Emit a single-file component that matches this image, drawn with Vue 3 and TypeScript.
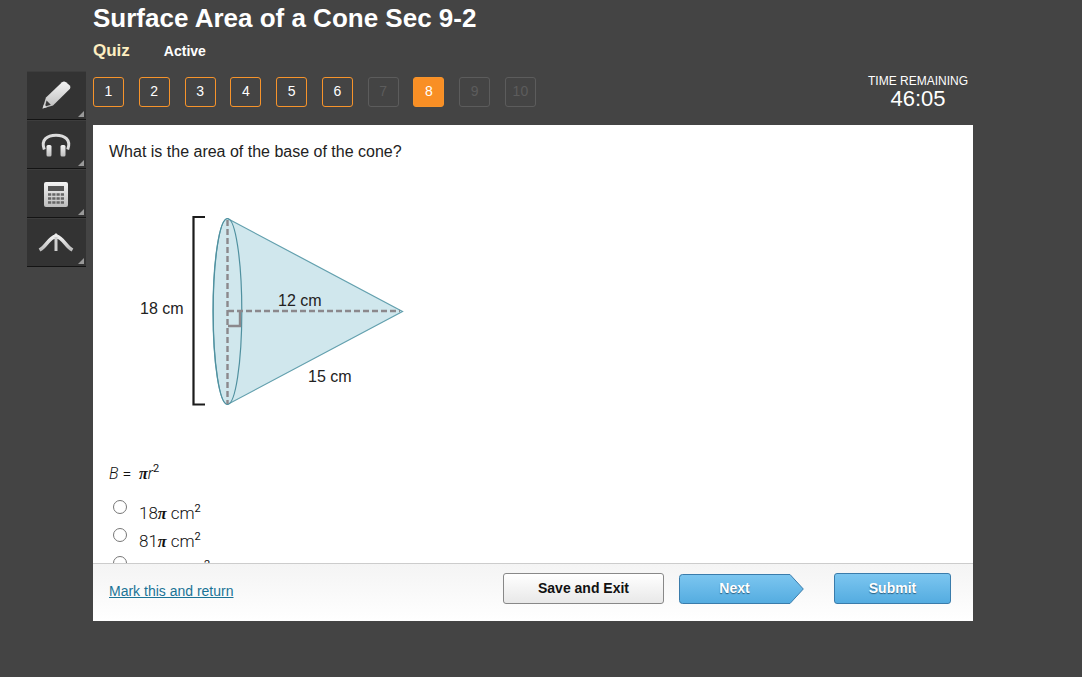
<script setup lang="ts">
import { ref } from 'vue'

type QuestionState = 'done' | 'active' | 'locked'
interface QuestionLink {
  n: number
  state: QuestionState
}

const questions: QuestionLink[] = [
  { n: 1, state: 'done' },
  { n: 2, state: 'done' },
  { n: 3, state: 'done' },
  { n: 4, state: 'done' },
  { n: 5, state: 'done' },
  { n: 6, state: 'done' },
  { n: 7, state: 'locked' },
  { n: 8, state: 'active' },
  { n: 9, state: 'locked' },
  { n: 10, state: 'locked' },
]

const options = ['18', '81', '162']
const answer = ref<string | null>(null)
</script>

<template>
  <div class="page">
    <svg class="defs" width="0" height="0" aria-hidden="true">
      <defs>
        <linearGradient id="silver" x1="0" y1="0" x2="0" y2="1">
          <stop offset="0" stop-color="#f4f4f4" />
          <stop offset="1" stop-color="#bdbdbd" />
        </linearGradient>
      </defs>
    </svg>

    <aside class="tools">
      <button class="tool" type="button" aria-label="Highlighter">
        <svg width="36" height="36" viewBox="0 0 36 36">
          <path d="M8 19.500L24 4.200Q26 2.800 28 4.200L31.800 7.500Q33 9 32 10.800L15 27.500L4.500 30.500Z" fill="url(#silver)" />
          <path d="M8.600 22.500L12.800 26.800L7 28.500Z" fill="#3a3a3a" />
          <path d="M4.500 30.500L6.200 26L8.800 29.200Z" fill="#d8d8d8" />
        </svg>
      </button>
      <button class="tool" type="button" aria-label="Audio">
        <svg width="36" height="36" viewBox="0 0 36 36">
          <path d="M6.300 22.500C2.500 12.500 9.500 8.200 18 8.200S33.500 12.500 29.700 22.500" fill="none" stroke="#dcdcdc" stroke-width="3" />
          <rect x="8.500" y="18" width="5" height="11.500" rx="1.500" fill="url(#silver)" />
          <rect x="22.500" y="18" width="5" height="11.500" rx="1.500" fill="url(#silver)" />
        </svg>
      </button>
      <button class="tool" type="button" aria-label="Calculator">
        <svg width="36" height="36" viewBox="0 0 36 36">
          <rect x="6" y="6" width="24" height="25" rx="2" fill="url(#silver)" />
          <rect x="10" y="10" width="16" height="5" fill="#555" />
          <path d="M10 18.500h16M10 22.500h16M10 26.500h16" stroke="#666" stroke-width="2.500" stroke-dasharray="3.250 1" />
        </svg>
      </button>
      <button class="tool" type="button" aria-label="Tools">
        <svg width="38" height="36" viewBox="0 0 38 36">
          <path d="M2.500 25C9.500 21.500 11 13.500 19 11C27 13.500 28.500 21.500 35.500 25" fill="none" stroke="url(#silver)" stroke-width="3.600" />
          <path d="M13.500 14L19 8L24.500 14Z" fill="#ececec" />
          <path d="M17.500 12h3v14h-3z" fill="#cfcfcf" />
        </svg>
      </button>
    </aside>

    <main class="main">
      <h1 class="title">Surface Area of a Cone Sec 9-2</h1>
      <div class="sub">
        <span class="kind">Quiz</span>
        <span class="status">Active</span>
      </div>
      <div class="bar">
        <nav class="numbers" aria-label="Questions">
          <button
            v-for="q in questions"
            :key="q.n"
            type="button"
            :class="['num', q.state]"
            :disabled="q.state === 'locked'"
          >{{ q.n }}</button>
        </nav>
        <div class="timer">
          <div class="timer-label">TIME REMAINING</div>
          <div class="timer-value">46:05</div>
        </div>
      </div>

      <section class="panel">
        <div class="content">
          <p class="question">What is the area of the base of the cone?</p>
          <svg class="figure" width="300" height="212" viewBox="0 0 300 212" role="img" aria-label="Cone">
            <path d="M118.500 14.500L293.500 107.500L118.500 200.500A14.500 93 0 0 1 118.500 14.500Z" fill="#d0e7ed" stroke="#63a0ae" stroke-width="1.200" />
            <ellipse cx="118.500" cy="107.500" rx="14.300" ry="93" fill="none" stroke="#4f909f" stroke-width="1.200" />
            <path d="M118.500 16V200" class="dash" />
            <path d="M119 107H291" class="dash" />
            <path d="M131 107V122H119" fill="none" stroke="#8b888c" stroke-width="2.400" />
            <path d="M96 13H84.500V200.500H96" fill="none" stroke="#1c1c1c" stroke-width="2.200" />
            <text x="31" y="110">18 cm</text>
            <text x="169" y="102">12 cm</text>
            <text x="199" y="178">15 cm</text>
          </svg>
          <p class="formula"><i>B</i> = &nbsp;<i><span class="pi">π</span>r</i><sup>2</sup></p>
          <div class="options">
            <label v-for="o in options" :key="o" class="option">
              <input v-model="answer" type="radio" name="answer" :value="o" />
              <span class="math">{{ o }}<i class="pi">π</i> cm<sup>2</sup></span>
            </label>
          </div>
        </div>
        <footer class="footer">
          <a class="mark" href="#">Mark this and return</a>
          <div class="actions">
            <button class="btn save" type="button">Save and Exit</button>
            <button class="next" type="button">
              <svg class="arrow" width="125" height="30" viewBox="0 0 125 30" aria-hidden="true">
                <defs>
                  <linearGradient id="sky" x1="0" y1="0" x2="0" y2="1">
                    <stop offset="0" stop-color="#7cc6f0" />
                    <stop offset="1" stop-color="#54ace0" />
                  </linearGradient>
                </defs>
                <path d="M3.500 .5H111L124.300 15L111 29.500H3.500Q.5 29.500 .5 26.500V3.500Q.5 .5 3.500 .5Z" fill="url(#sky)" stroke="#3a7cab" />
              </svg>
              <span class="next-text">Next</span>
            </button>
            <button class="btn submit" type="button">Submit</button>
          </div>
        </footer>
      </section>
    </main>
  </div>
</template>

<style>
body {
  margin: 0;
  background: #444;
}
</style>

<style scoped>
.page {
  box-sizing: border-box;
  height: 100vh;
  min-height: 400px;
  display: flex;
  gap: 7px;
  padding: 0 109px 56px 27px;
  background: #444;
  color: #fff;
  font-family: "Liberation Sans", Arial, sans-serif;
}
.defs {
  position: absolute;
}
button {
  font-family: inherit;
  cursor: pointer;
}
.tools {
  flex: none;
  width: 59px;
  padding-top: 71px;
}
.tool {
  position: relative;
  display: flex;
  align-items: center;
  justify-content: center;
  width: 100%;
  height: 49px;
  padding: 0 2px 0 0;
  border: 0;
  border-top: 1px solid #3d3d3d;
  border-bottom: 1px solid #141414;
  background: #333;
}
.tool::after {
  content: "";
  position: absolute;
  right: 2px;
  bottom: 2px;
  border-left: 6px solid transparent;
  border-bottom: 6px solid #999;
}
.main {
  flex: 1;
  min-width: 0;
  display: flex;
  flex-direction: column;
}
.title {
  margin: 0;
  font-size: 26px;
  line-height: 36px;
}
.sub {
  display: flex;
  align-items: baseline;
  gap: 34px;
  height: 36px;
  line-height: 30px;
  font-weight: bold;
}
.kind {
  font-size: 17px;
  color: #fdeec0;
}
.status {
  font-size: 14px;
}
.bar {
  flex: none;
  display: flex;
  justify-content: space-between;
  height: 53px;
}
.numbers {
  display: flex;
  justify-content: space-between;
  width: 443px;
  padding-top: 5px;
}
.num {
  width: 31px;
  height: 30px;
  padding: 0 0 2px;
  border: 1px solid #f7942b;
  border-radius: 3px;
  background: transparent;
  color: #fff;
  font-size: 14px;
}
.num.active {
  background: #f98f25;
}
.num.locked {
  border-color: #5c5c5c;
  color: #5c5c5c;
}
.timer {
  padding-right: 5px;
  text-align: center;
}
.timer-label {
  font-size: 12px;
  line-height: 18px;
}
.timer-value {
  font-size: 22px;
  line-height: 18px;
}
.panel {
  flex: 1;
  min-height: 0;
  display: flex;
  flex-direction: column;
  background: #fff;
  color: #222;
}
.content {
  flex: 1;
  min-height: 0;
  overflow: hidden;
  padding: 15px 16px 0;
}
.question {
  margin: 0 0 40px;
  font-size: 16px;
  line-height: 24px;
}
.figure {
  display: block;
}
.figure text {
  font-size: 16px;
  fill: #222;
}
.dash {
  fill: none;
  stroke: #8b888c;
  stroke-width: 2.4;
  stroke-dasharray: 6 3;
}
.formula,
.math {
  font-family: Roboto, "Liberation Sans", sans-serif;
  font-weight: 300;
  font-size: 17px;
  line-height: 28px;
  color: #111;
}
.formula {
  margin: 44px 0 0;
  font-size: 16px;
}
.pi {
  font-family: "Liberation Serif", serif;
  font-style: italic;
  font-weight: bold;
  font-size: 16px;
}
sup {
  font-size: 11px;
  font-weight: 400;
  line-height: 0;
  vertical-align: 7px;
}
.options {
  padding-top: 7px;
}
.option {
  display: flex;
  align-items: flex-start;
  gap: 12px;
  height: 28px;
  padding-left: 4px;
}
.option input {
  appearance: none;
  box-sizing: border-box;
  width: 14px;
  height: 14px;
  margin: 5px 0 0;
  border: 1px solid #777;
  border-radius: 50%;
  background: #fff;
}
.option input:checked {
  box-shadow: inset 0 0 0 3px #fff;
  background: #333;
}
.math {
  padding-top: 4px;
}
.footer {
  flex: none;
  display: flex;
  align-items: center;
  justify-content: space-between;
  height: 48px;
  padding: 0 22px 9px 16px;
  border-top: 1px solid #ccc;
  background: linear-gradient(#f4f4f4, #fff);
}
.mark {
  padding-top: 5px;
  color: #1b7396;
  font-size: 14px;
}
.actions {
  display: flex;
  align-items: flex-end;
}
.btn {
  height: 31px;
  padding: 0;
  border: 1px solid #888;
  border-radius: 3px;
  font-size: 14px;
  font-weight: bold;
}
.save {
  width: 161px;
  margin-right: 15px;
  background: linear-gradient(#fff, #e8e8e8);
  color: #111;
}
.submit {
  width: 117px;
  border-color: #3a7cab;
  background: linear-gradient(#7cc6f0, #54ace0);
  color: #fff;
  text-shadow: 0 1px 1px #2c5f80;
}
.next {
  position: relative;
  width: 125px;
  height: 30px;
  margin-right: 30px;
  padding: 0 14px 1px 0;
  border: 0;
  background: none;
  color: #fff;
  font-size: 14px;
  font-weight: bold;
  text-shadow: 0 1px 1px #2c5f80;
}
.arrow {
  position: absolute;
  inset: 0;
}
.next-text {
  position: relative;
}
</style>
